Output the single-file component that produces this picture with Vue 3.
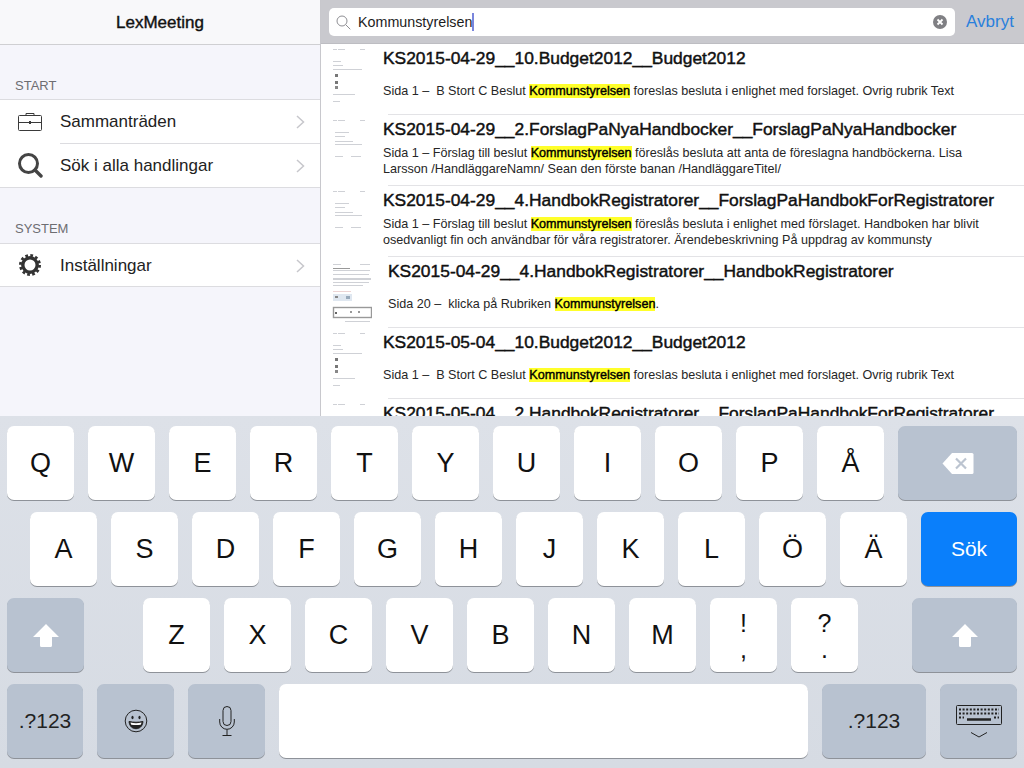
<script setup>
const row1 = ['Q','W','E','R','T','Y','U','I','O','P','Å']
const row2 = ['A','S','D','F','G','H','J','K','L','Ö','Ä']
const row3 = ['Z','X','C','V','B','N','M']

const thumbA = [[0,2,4,1],[5,2,7,1],[27,2,5,1],[0,14,8,1],[0,18,10,1],[0,22,29,1],[2,27,3,3,'#777'],[2,34,3,3,'#777'],[2,39,3,3,'#888'],[0,47,22,1],[0,54,7,1]]
const thumbB = [[0,2,4,1],[5,2,7,1],[27,2,5,1],[2,14,14,1],[2,18,10,1],[2,23,18,1],[2,26,27,1],[2,38,8,1],[18,38,10,1]]
const thumbC = [[1,1,8,1],[28,1,10,1],[1,5,17,1,'#999'],[1,7,37,1],[1,11,36,1],[1,15,38,2],[1,19,36,1],[1,22,30,1],[1,28,18,1,'#ecd4d4'],[1,31,19,7,'#dfe7f0'],[3,33,3,2,'#888'],[14,33,4,3,'#9ab'],[3,49,2,2,'#666'],[18,48,2,2,'#999'],[26,48,2,2,'#999'],[13,58,25,1]]

const results = [
  { title: 'KS2015-04-29__10.Budget2012__Budget2012', before: 'Sida 1 –  B Stort C Beslut ', after: ' foreslas besluta i enlighet med forslaget. Ovrig rubrik Text', thumb: thumbA },
  { title: 'KS2015-04-29__2.ForslagPaNyaHandbocker__ForslagPaNyaHandbocker', before: 'Sida 1 – Förslag till beslut ', after: ' föreslås besluta att anta de föreslagna handböckerna. Lisa Larsson /HandläggareNamn/ Sean den förste banan /HandläggareTitel/', thumb: thumbB, two: true },
  { title: 'KS2015-04-29__4.HandbokRegistratorer__ForslagPaHandbokForRegistratorer', before: 'Sida 1 – Förslag till beslut ', after: ' föreslås besluta i enlighet med förslaget. Handboken har blivit osedvanligt fin och användbar för våra registratorer. Ärendebeskrivning På uppdrag av kommunsty', thumb: thumbB, two: true },
  { title: 'KS2015-04-29__4.HandbokRegistratorer__HandbokRegistratorer', before: 'Sida 20 –  klicka på Rubriken ', after: '.', thumb: thumbC, wide: true },
  { title: 'KS2015-05-04__10.Budget2012__Budget2012', before: 'Sida 1 –  B Stort C Beslut ', after: ' foreslas besluta i enlighet med forslaget. Ovrig rubrik Text', thumb: thumbA },
  { title: 'KS2015-05-04__2.HandbokRegistratorer__ForslagPaHandbokForRegistratorer', before: '', after: '', thumb: thumbB, nomark: true },
]
</script>

<template>
  <div class="screen">
    <div class="top">
      <aside class="side">
        <header class="side-head">LexMeeting</header>
        <div class="label first">START</div>
        <div class="group">
          <div class="item">
            <svg class="ico" width="26" height="22" viewBox="0 0 26 22" fill="none" stroke="#3a3a3a" stroke-width="1">
              <rect x="1.5" y="4.5" width="23" height="15" rx="1"/>
              <path d="M9 4.5V2.5h8v2M1.5 11.5h23"/>
              <rect x="12.5" y="10.5" width="1" height="2" fill="#3a3a3a"/>
            </svg>
            <span class="item-text border">Sammanträden</span>
            <svg class="chev" width="9" height="14" viewBox="0 0 9 14" fill="none" stroke="#c7c7cc" stroke-width="1.5"><path d="M1 1l6.5 6L1 13"/></svg>
          </div>
          <div class="item">
            <svg class="ico" width="26" height="26" viewBox="0 0 26 26" fill="none" stroke="#444" stroke-width="3">
              <circle cx="11.5" cy="11.5" r="9"/>
              <path d="M18 18l6 6" stroke-linecap="round" stroke-width="3.4"/>
            </svg>
            <span class="item-text">Sök i alla handlingar</span>
            <svg class="chev" width="9" height="14" viewBox="0 0 9 14" fill="none" stroke="#c7c7cc" stroke-width="1.5"><path d="M1 1l6.5 6L1 13"/></svg>
          </div>
        </div>
        <div class="label">SYSTEM</div>
        <div class="group">
          <div class="item single">
            <svg class="ico" width="26" height="24" viewBox="0 0 24 24" fill="none" stroke="#333">
              <circle cx="12" cy="12" r="7.2" stroke-width="3.4"/>
              <circle cx="12" cy="12" r="9.6" stroke-width="2.8" stroke-dasharray="2.7 2.33"/>
            </svg>
            <span class="item-text">Inställningar</span>
            <svg class="chev" width="9" height="14" viewBox="0 0 9 14" fill="none" stroke="#c7c7cc" stroke-width="1.5"><path d="M1 1l6.5 6L1 13"/></svg>
          </div>
        </div>
      </aside>
      <main class="main">
        <div class="search">
          <div class="field">
            <svg class="glass" width="15" height="15" viewBox="0 0 15 15" fill="none" stroke="#8e8e93" stroke-width="1"><circle cx="6" cy="6" r="5"/><path d="M9.7 9.7l4.6 4.6"/></svg>
            <span class="query">Kommunstyrelsen</span><span class="caret"></span>
            <svg class="clear" width="14" height="14" viewBox="0 0 14 14"><circle cx="7" cy="7" r="7" fill="#808084"/><path d="M4.5 4.5l5 5M9.5 4.5l-5 5" stroke="#fff" stroke-width="1.8"/></svg>
          </div>
          <span class="cancel">Avbryt</span>
        </div>
        <div class="list">
          <div v-for="r in results" :key="r.title" class="result" :class="{ wide: r.wide }">
            <div class="res-body">
              <svg class="thumb" width="40" height="60" viewBox="0 0 40 60">
                <rect v-for="(t, i) in r.thumb" :key="i" :x="t[0]" :y="t[1]" :width="t[2]" :height="t[3]" :fill="t[4] || '#cfd1d6'"/>
                <rect v-if="r.wide" x="1.5" y="44.5" width="38" height="10" fill="none" stroke="#999" stroke-width="1.4"/>
              </svg>
              <div class="res-text">
                <div class="res-title">{{ r.title }}</div>
                <div v-if="!r.nomark" class="res-snippet" :class="{ two: r.two }"><div>{{ r.before }}<mark>Kommunstyrelsen</mark>{{ r.after }}</div></div>
              </div>
            </div>
            <div class="res-sep"></div>
          </div>
        </div>
      </main>
    </div>

    <div class="keyboard">
      <div class="kb-row">
        <div v-for="k in row1" :key="k" class="key">{{ k }}</div>
        <div class="key dark back">
          <svg width="32" height="23" viewBox="0 0 32 23"><path d="M10 1h20a1.5 1.5 0 0 1 1.5 1.5v18a1.5 1.5 0 0 1-1.5 1.5H10L0.5 11.5z" fill="#fff"/><path d="M14 6.5l10 10M24 6.5l-10 10" stroke="#bcc4d0" stroke-width="2.2"/></svg>
        </div>
      </div>
      <div class="kb-row indent">
        <div v-for="k in row2" :key="k" class="key">{{ k }}</div>
        <div class="key go">Sök</div>
      </div>
      <div class="kb-row">
        <div class="key dark shift-l">
          <svg width="26" height="23" viewBox="0 0 26 23"><path d="M13 0L26 13H19V21.5a1.5 1.5 0 0 1-1.5 1.5h-9A1.5 1.5 0 0 1 7 21.5V13H0z" fill="#fff"/></svg>
        </div>
        <div class="letters">
          <div v-for="k in row3" :key="k" class="key">{{ k }}</div>
          <div class="key punct"><span>!</span><span>,</span></div>
          <div class="key punct"><span>?</span><span>.</span></div>
        </div>
        <div class="key dark shift-r">
          <svg width="26" height="23" viewBox="0 0 26 23"><path d="M13 0L26 13H19V21.5a1.5 1.5 0 0 1-1.5 1.5h-9A1.5 1.5 0 0 1 7 21.5V13H0z" fill="#fff"/></svg>
        </div>
      </div>
      <div class="kb-row">
        <div class="key dark num n1">.?123</div>
        <div class="key dark k77">
          <svg width="24" height="24" viewBox="0 0 24 24" fill="none" stroke="#222" stroke-width="1"><circle cx="12" cy="12" r="10.8"/><path d="M5 12.5c4.500 1 9.500 1 14 0-.5 5-3.500 7.200-7 7.200s-6.500-2.200-7-7.200z" fill="#222"/><path d="M6.500 13.600c3.500.7 7.500.7 11 0-.2 1-.4 1.500-.8 2.100-3 .5-6.400.5-9.400 0-.4-.6-.6-1.100-.8-2.100z" fill="#fff" stroke="none"/><ellipse cx="8.500" cy="8.500" rx="1.100" ry="1.800" fill="#222" stroke="none"/><ellipse cx="15.500" cy="8.500" rx="1.100" ry="1.800" fill="#222" stroke="none"/></svg>
        </div>
        <div class="key dark k77">
          <svg width="16" height="30" viewBox="0 0 16 30" fill="none" stroke="#222" stroke-width="1"><rect x="4" y="0.500" width="8" height="19" rx="4"/><path d="M0.700 13v3a7.300 7.300 0 0 0 14.600 0v-3M8 23.500v6M3.500 29.500h9"/></svg>
        </div>
        <div class="key space"></div>
        <div class="key dark num n2">.?123</div>
        <div class="key dark k77">
          <svg width="46" height="33" viewBox="0 0 46 33" fill="none"><rect x="0.500" y="0.500" width="45" height="19" rx="1" stroke="#222"/><path d="M3 4.500h40M3 8.500h40M3 12.500h5M38 12.500h5" stroke="#222" stroke-width="2.200" stroke-dasharray="2 1.600"/><path d="M11 14.500h24" stroke="#222" stroke-width="2.500"/><path d="M15 27.500l8 4.500 8-4.500" stroke="#222"/></svg>
        </div>
      </div>
    </div>
  </div>
</template>

<style>
html, body { margin: 0; background: #d9dee6; }
</style>

<style scoped>
.screen {
  width: 1024px;
  height: 768px;
  display: flex;
  flex-direction: column;
  overflow: hidden;
  font-family: "Liberation Sans", Arial, sans-serif;
  color: #111;
}
.top {
  height: 416px;
  display: flex;
  overflow: hidden;
  flex: none;
}
.side {
  width: 320px;
  flex: none;
  background: #f5f5fb;
  border-right: 1px solid #c8c8cd;
}
.side-head {
  height: 44px;
  line-height: 45px;
  background: #f8f8fa;
  border-bottom: 1px solid #cfcfd2;
  text-align: center;
  font-size: 17px;
  font-weight: 400;
  -webkit-text-stroke: 0.4px #111;
  color: #111;
}
.label {
  height: 55px;
  box-sizing: border-box;
  padding: 33px 0 0 15px;
  font-size: 13px;
  line-height: 16px;
  color: #6d6d72;
}
.label.first { height: 54px; }
.group {
  background: #fff;
  border-top: 1px solid #dcdce0;
  border-bottom: 1px solid #dcdce0;
}
.item {
  position: relative;
  height: 43.5px;
  display: flex;
  align-items: center;
}
.item.single { height: 42px; }
.ico {
  width: 30px;
  margin: 0 15px 0 15px;
  flex: none;
}
.item-text {
  flex: 1;
  align-self: stretch;
  display: flex;
  align-items: center;
  padding-top: 1px;
  font-size: 17px;
  color: #222;
}
.item-text.border { border-bottom: 1px solid #dcdce0; }
.chev {
  position: absolute;
  right: 15px;
  top: 15px;
}
.main {
  flex: 1;
  min-width: 0;
  background: #fff;
}
.search {
  height: 44px;
  box-sizing: border-box;
  background: #c9c9ce;
  border-bottom: 1px solid #bdbdc2;
  padding: 8px 9px 7px 8px;
  display: flex;
  align-items: stretch;
}
.field {
  width: 626px;
  background: #fff;
  border-radius: 5px;
  display: flex;
  align-items: center;
  padding: 0 8px 0 7px;
  box-sizing: border-box;
}
.glass { margin-right: 7px; flex: none; }
.query { font-size: 14.3px; color: #1c1c1c; }
.caret {
  width: 2px;
  height: 18px;
  background: #7a86dc;
}
.clear { margin-left: auto; }
.cancel {
  margin-left: 11px;
  font-size: 17px;
  line-height: 28px;
  color: #2a80dc;
}
.list { overflow: hidden; }
.result { height: 71px; display: flex; flex-direction: column; }
.res-body {
  flex: 1;
  display: flex;
  min-height: 0;
  padding-left: 12px;
}
.thumb { flex: none; margin: 3px 10px 0 0; filter: blur(0.35px); }
.result.wide .res-body { padding-left: 11px; }
.result.wide .thumb { margin: 6px 16px 0 0; }
.res-text { flex: 1; min-width: 0; display: flex; flex-direction: column; }
.res-title {
  height: 30px;
  line-height: 29px;
  font-size: 17.4px;
  font-weight: 400;
  -webkit-text-stroke: 0.45px #111;
  white-space: nowrap;
  color: #111;
}
.res-snippet {
  height: 33px;
  max-width: 602px;
  display: flex;
  align-items: center;
  font-size: 12.6px;
  line-height: 16px;
  color: #262626;
  white-space: pre-wrap;
}
.res-snippet.two { height: 31px; }
mark { background: #ffff2a; color: #000; -webkit-text-stroke: 0.4px #000; }
.res-sep {
  height: 1px;
  margin-left: 67px;
  background: #e3e3e6;
  flex: none;
}
.keyboard {
  flex: 1;
  background: linear-gradient(#dde1e8, #d6dbe3);
  padding: 10px 7px;
  box-sizing: border-box;
  display: flex;
  flex-direction: column;
  gap: 12px;
}
.kb-row { display: flex; gap: 14px; height: 74px; }
.kb-row.indent { padding-left: 23px; }
.letters { display: flex; gap: 14px; margin-left: 45px; margin-right: 40px; }
.key {
  width: 67px;
  height: 74px;
  box-sizing: border-box;
  background: #fff;
  border-radius: 7px;
  box-shadow: 0 1px 0 #8e9299;
  display: flex;
  align-items: center;
  justify-content: center;
  padding-top: 1px;
  font-size: 27px;
  color: #111;
  flex: none;
}
.key.dark { background: #b8c2d0; padding-top: 0; }
.back { width: 119px; }
.go { width: 96px; background: #0a7ffb; color: #fff; font-size: 21px; padding-top: 0; }
.shift-l { width: 77px; }
.shift-r { width: 105px; }
.punct {
  flex-direction: column;
  font-size: 25px;
  line-height: 26px;
}
.num { font-size: 21px; color: #222; }
.n1 { width: 76px; }
.n2 { width: 104px; }
.k77 { width: 77px; }
.space { width: 529px; }
</style>
